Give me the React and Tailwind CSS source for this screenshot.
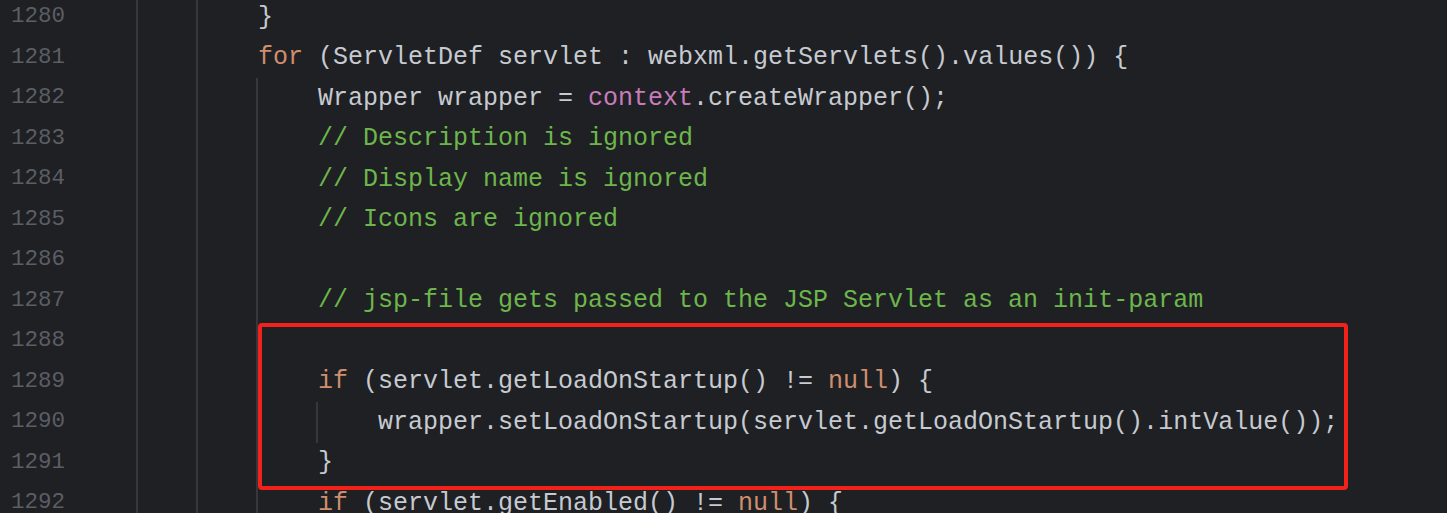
import React from "react";

const K = "text-[#cf8e6d]";
const F = "text-[#c77dbb]";
const C = "text-[#6cb64c]";

const lines = [
  { n: 1280, lvl: 2, guides: 2, parts: [["}", ""]] },
  {
    n: 1281,
    lvl: 2,
    guides: 2,
    parts: [
      ["for", K],
      [" (ServletDef servlet : webxml.getServlets().values()) {", ""],
    ],
  },
  {
    n: 1282,
    lvl: 3,
    guides: 3,
    parts: [
      ["Wrapper wrapper = ", ""],
      ["context", F],
      [".createWrapper();", ""],
    ],
  },
  { n: 1283, lvl: 3, guides: 3, parts: [["// Description is ignored", C]] },
  { n: 1284, lvl: 3, guides: 3, parts: [["// Display name is ignored", C]] },
  { n: 1285, lvl: 3, guides: 3, parts: [["// Icons are ignored", C]] },
  { n: 1286, lvl: 3, guides: 3, parts: [] },
  {
    n: 1287,
    lvl: 3,
    guides: 3,
    parts: [["// jsp-file gets passed to the JSP Servlet as an init-param", C]],
  },
  { n: 1288, lvl: 3, guides: 3, parts: [] },
  {
    n: 1289,
    lvl: 3,
    guides: 3,
    parts: [
      ["if", K],
      [" (servlet.getLoadOnStartup() != ", ""],
      ["null", K],
      [") {", ""],
    ],
  },
  {
    n: 1290,
    lvl: 4,
    guides: 4,
    parts: [
      ["wrapper.setLoadOnStartup(servlet.getLoadOnStartup().intValue());", ""],
    ],
  },
  { n: 1291, lvl: 3, guides: 3, parts: [["}", ""]] },
  {
    n: 1292,
    lvl: 3,
    guides: 3,
    parts: [
      ["if", K],
      [" (servlet.getEnabled() != ", ""],
      ["null", K],
      [") {", ""],
    ],
  },
];

function Line({ l }) {
  const indents = [];
  for (let i = 0; i < l.lvl; i++) {
    indents.push(
      <span
        key={i}
        className={
          i < l.guides
            ? "w-[60px] h-full shrink-0 border-l-[2px] border-[#35373b]"
            : "w-[60px] h-full shrink-0"
        }
      />
    );
  }
  return (
    <div className="flex h-[40.5px] items-center">
      <div className="w-[136px] shrink-0 pl-[11px] text-[22.5px] text-[#5b5e64]">
        {l.n}
      </div>
      <div className="flex h-full items-center">
        {indents}
        <span className="whitespace-pre pl-[2px] text-[25px] text-[#c6cad1]">
          {l.parts.map((p, i) => (
            <span key={i} className={p[1]}>
              {p[0]}
            </span>
          ))}
        </span>
      </div>
    </div>
  );
}

export default function App() {
  return (
    <div
      className="relative w-[1447px] h-[513px] overflow-hidden bg-[#1f2023]"
      style={{ fontFamily: '"Liberation Mono", "DejaVu Sans Mono", monospace' }}
    >
      <div className="mt-[-3px] flex flex-col">
        {lines.map((l) => (
          <Line key={l.n} l={l} />
        ))}
      </div>
      <div className="absolute left-[258px] top-[323px] w-[1090px] h-[167px] rounded-[4px] border-[4px] border-[#f2221b]" />
    </div>
  );
}
